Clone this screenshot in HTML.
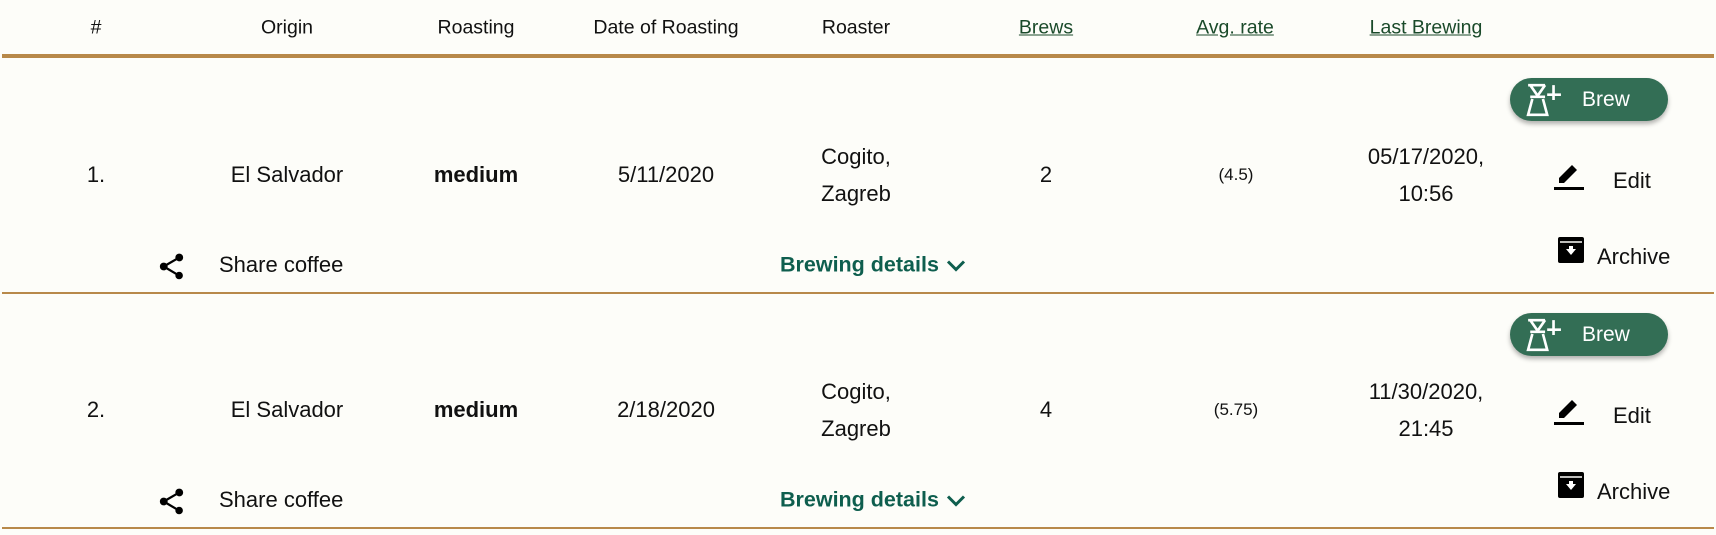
<!DOCTYPE html><html><head><style>
body{margin:0;width:1716px;height:531px;background:#fdfdf9;font-family:"Liberation Sans",sans-serif;color:#111;position:relative;overflow:hidden}
.t{position:absolute;white-space:nowrap;transform:translate(-50%,-50%)}
.l{position:absolute;white-space:nowrap;transform:translateY(-50%)}
.h{font-size:19.5px;}
.h u{color:#1a4a2a}
.b{font-size:22px}
.line{position:absolute;left:2px;right:2px;background:#b8894a}
.btn{position:absolute;width:158px;height:43px;border-radius:22px;background:#336e55;box-shadow:0 3px 5px rgba(0,0,0,.3);color:#fff;font-size:21px}
.bd{color:#0e5e4e;font-weight:bold;font-size:21.5px}
</style></head><body>
<div class="t h" style="left:96px;top:28px">#</div>
<div class="t h" style="left:287px;top:28px">Origin</div>
<div class="t h" style="left:476px;top:28px">Roasting</div>
<div class="t h" style="left:666px;top:28px">Date of Roasting</div>
<div class="t h" style="left:856px;top:28px">Roaster</div>
<div class="t h" style="left:1046px;top:28px"><u>Brews</u></div>
<div class="t h" style="left:1235px;top:28px"><u>Avg. rate</u></div>
<div class="t h" style="left:1426px;top:28px"><u>Last Brewing</u></div>
<div class="line" style="top:54px;height:4px"></div>

<div style="position:absolute;left:0;top:0;width:1716px;height:300px">
<div class="t b" style="left:96px;top:175px">1.</div>
<div class="t b" style="left:287px;top:175px">El Salvador</div>
<div class="t b" style="left:476px;top:175px;font-weight:bold">medium</div>
<div class="t b" style="left:666px;top:175px">5/11/2020</div>
<div class="t b" style="left:856px;top:175px;line-height:37px;text-align:left">Cogito,<br>Zagreb</div>
<div class="t b" style="left:1046px;top:175px">2</div>
<div class="t" style="left:1236px;top:175px;font-size:17px">(4.5)</div>
<div class="t b" style="left:1426px;top:175px;line-height:37px;text-align:center">05/17/2020,<br>10:56</div>
<svg style="position:absolute;left:156px;top:251px" width="31" height="31" viewBox="0 0 24 24"><path d="M18 16.1c-.8 0-1.5.3-2 .8l-7.1-4.2c.1-.2.1-.5.1-.7s0-.5-.1-.7L16 7.2c.5.5 1.2.8 2 .8 1.7 0 3-1.3 3-3s-1.3-3-3-3-3 1.3-3 3c0 .2 0 .5.1.7L8 9.8C7.5 9.3 6.8 9 6 9c-1.7 0-3 1.3-3 3s1.3 3 3 3c.8 0 1.5-.3 2-.8l7.1 4.2c-.1.2-.1.4-.1.6 0 1.6 1.3 2.9 2.9 2.9s2.9-1.3 2.9-2.9-1.3-2.9-2.9-2.9z"/></svg>
<div class="l b" style="left:219px;top:265px">Share coffee</div>
<div class="l bd" style="left:780px;top:265px">Brewing details <svg width="22" height="14" viewBox="0 0 22 14" style="vertical-align:middle"><path d="M3 3l8 8 8-8" fill="none" stroke="#0e5e4e" stroke-width="3"/></svg></div>
<div class="btn" style="left:1510px;top:78px">
<svg style="position:absolute;left:16px;top:4px" width="36" height="36" viewBox="0 0 34 34" fill="none" stroke="#fff" stroke-width="2.5"><path d="M2 3h16M4 3l7 10 7-10M4 14h14M6 16l-4 15h18l-4-15M20 12h13M26 3v14"/></svg>
<span style="position:absolute;left:72px;top:10px">Brew</span></div>
<svg style="position:absolute;left:1552px;top:160px" width="34" height="32" viewBox="0 0 34 32"><path d="M7 18l13-13 5 5-13 13h-5z" fill="#000"/><rect x="2" y="27" width="30" height="3" fill="#000"/></svg>
<div class="l b" style="left:1613px;top:181px">Edit</div>
<svg style="position:absolute;left:1557px;top:236px" width="28" height="28" viewBox="0 0 28 28"><rect x="1" y="1" width="26" height="26" rx="2" fill="#000"/><path d="M3 6h22" stroke="#fdfdf9" stroke-width="1.5"/><path d="M9 13h10l-5 6z M12 10h4v4h-4z" fill="#fff"/></svg>
<div class="l b" style="left:1597px;top:257px">Archive</div>
</div>
<div class="line" style="top:292px;height:1.5px"></div>

<div style="position:absolute;left:0;top:235px;width:1716px;height:300px">
<div class="t b" style="left:96px;top:175px">2.</div>
<div class="t b" style="left:287px;top:175px">El Salvador</div>
<div class="t b" style="left:476px;top:175px;font-weight:bold">medium</div>
<div class="t b" style="left:666px;top:175px">2/18/2020</div>
<div class="t b" style="left:856px;top:175px;line-height:37px;text-align:left">Cogito,<br>Zagreb</div>
<div class="t b" style="left:1046px;top:175px">4</div>
<div class="t" style="left:1236px;top:175px;font-size:17px">(5.75)</div>
<div class="t b" style="left:1426px;top:175px;line-height:37px;text-align:center">11/30/2020,<br>21:45</div>
<svg style="position:absolute;left:156px;top:251px" width="31" height="31" viewBox="0 0 24 24"><path d="M18 16.1c-.8 0-1.5.3-2 .8l-7.1-4.2c.1-.2.1-.5.1-.7s0-.5-.1-.7L16 7.2c.5.5 1.2.8 2 .8 1.7 0 3-1.3 3-3s-1.3-3-3-3-3 1.3-3 3c0 .2 0 .5.1.7L8 9.8C7.5 9.3 6.8 9 6 9c-1.7 0-3 1.3-3 3s1.3 3 3 3c.8 0 1.5-.3 2-.8l7.1 4.2c-.1.2-.1.4-.1.6 0 1.6 1.3 2.9 2.9 2.9s2.9-1.3 2.9-2.9-1.3-2.9-2.9-2.9z"/></svg>
<div class="l b" style="left:219px;top:265px">Share coffee</div>
<div class="l bd" style="left:780px;top:265px">Brewing details <svg width="22" height="14" viewBox="0 0 22 14" style="vertical-align:middle"><path d="M3 3l8 8 8-8" fill="none" stroke="#0e5e4e" stroke-width="3"/></svg></div>
<div class="btn" style="left:1510px;top:78px">
<svg style="position:absolute;left:16px;top:4px" width="36" height="36" viewBox="0 0 34 34" fill="none" stroke="#fff" stroke-width="2.5"><path d="M2 3h16M4 3l7 10 7-10M4 14h14M6 16l-4 15h18l-4-15M20 12h13M26 3v14"/></svg>
<span style="position:absolute;left:72px;top:10px">Brew</span></div>
<svg style="position:absolute;left:1552px;top:160px" width="34" height="32" viewBox="0 0 34 32"><path d="M7 18l13-13 5 5-13 13h-5z" fill="#000"/><rect x="2" y="27" width="30" height="3" fill="#000"/></svg>
<div class="l b" style="left:1613px;top:181px">Edit</div>
<svg style="position:absolute;left:1557px;top:236px" width="28" height="28" viewBox="0 0 28 28"><rect x="1" y="1" width="26" height="26" rx="2" fill="#000"/><path d="M3 6h22" stroke="#fdfdf9" stroke-width="1.5"/><path d="M9 13h10l-5 6z M12 10h4v4h-4z" fill="#fff"/></svg>
<div class="l b" style="left:1597px;top:257px">Archive</div>
</div>
<div class="line" style="top:527px;height:1.5px"></div>
</body></html>
